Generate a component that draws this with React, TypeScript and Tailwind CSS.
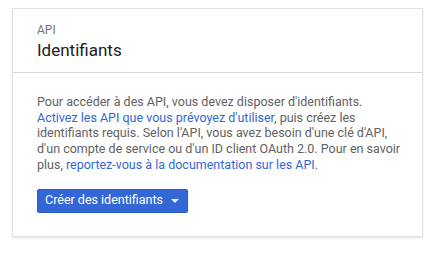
const App = () => {
  return (
    <div className="min-h-[255px] w-[446px] bg-white pt-[8px] pl-[12px] font-['Roboto',sans-serif]">
      <div className="w-[411px] border border-[#e3e3e3] bg-white shadow-[0_1px_2px_rgba(0,0,0,0.12)]">
        <div className="border-b border-[#d9d9d9] px-6 pt-[14px] pb-[10px]">
          <div className="text-[12px] leading-[15px] text-[#757575]">API</div>
          <div className="text-[17px] leading-[24px] text-[#212121]">Identifiants</div>
        </div>
        <div className="px-6 pt-[21px] pb-[23px]">
          <p className="whitespace-nowrap text-[12.5px] leading-[15.7px] text-[#616161]">
            Pour accéder à des API, vous devez disposer d'identifiants.
            <br />
            <span className="text-[#3367d6]">Activez les API que vous prévoyez d'utiliser</span>, puis créez les
            <br />
            identifiants requis. Selon l'API, vous avez besoin d'une clé d'API,
            <br />
            d'un compte de service ou d'un ID client OAuth 2.0. Pour en savoir
            <br />
            plus, <span className="text-[#3367d6]">reportez-vous à la documentation sur les API</span>.
          </p>
          <button className="mt-[16px] flex h-[24px] items-center gap-[8px] rounded-[2px] border border-[#2a5cc9] bg-[#3367d6] pl-[7px] pr-[8px] text-[12.5px] text-white">
            <span>Créer des identifiants</span>
            <svg width="8" height="4" viewBox="0 0 8 4" className="mt-[1px]">
              <path d="M0 0 L8 0 L4 4 Z" fill="#e8eefb" />
            </svg>
          </button>
        </div>
      </div>
    </div>
  );
};

export default App;
